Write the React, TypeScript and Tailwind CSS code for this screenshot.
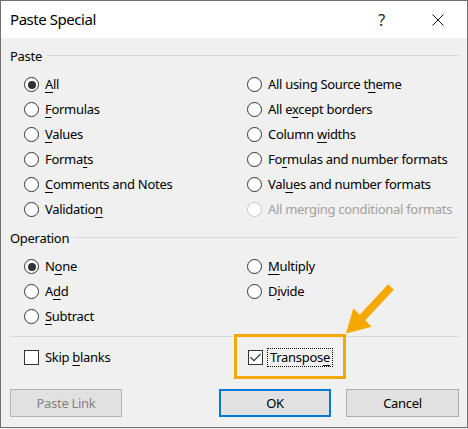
import React from 'react';

type Option = {
  label: string;
  accel: number; // index of the underlined access key, -1 for none
  checked?: boolean;
  disabled?: boolean;
};

const pasteLeft: Option[] = [
  { label: 'All', accel: 0, checked: true },
  { label: 'Formulas', accel: 0 },
  { label: 'Values', accel: 0 },
  { label: 'Formats', accel: 5 },
  { label: 'Comments and Notes', accel: 0 },
  { label: 'Validation', accel: 9 },
];

const pasteRight: Option[] = [
  { label: 'All using Source theme', accel: 18 },
  { label: 'All except borders', accel: 5 },
  { label: 'Column widths', accel: 7 },
  { label: 'Formulas and number formats', accel: 2 },
  { label: 'Values and number formats', accel: 3 },
  { label: 'All merging conditional formats', accel: -1, disabled: true },
];

const operationLeft: Option[] = [
  { label: 'None', accel: 1, checked: true },
  { label: 'Add', accel: 1 },
  { label: 'Subtract', accel: 0 },
];

const operationRight: Option[] = [
  { label: 'Multiply', accel: 0 },
  { label: 'Divide', accel: 1 },
];

function Accel({ text, at }: { text: string; at: number }) {
  if (at < 0) return <>{text}</>;
  return (
    <>
      {text.slice(0, at)}
      <span className="underline underline-offset-[3px]">{text[at]}</span>
      {text.slice(at + 1)}
    </>
  );
}

function Radio({ checked, disabled }: { checked?: boolean; disabled?: boolean }) {
  return (
    <span
      className={`flex h-[15px] w-[15px] shrink-0 items-center justify-center rounded-full border bg-white ${
        disabled ? 'border-[#c4c4c4]' : 'border-[#333333]'
      }`}
    >
      {checked && <span className="h-[8px] w-[8px] rounded-full bg-[#333333]" />}
    </span>
  );
}

function RadioRow({ option }: { option: Option }) {
  return (
    <div className="flex h-[25px] items-center gap-[6px] whitespace-nowrap">
      <Radio checked={option.checked} disabled={option.disabled} />
      <span className={option.disabled ? 'text-[#a0a0a0]' : 'text-black'}>
        <Accel text={option.label} at={option.accel} />
      </span>
    </div>
  );
}

function CheckBox({ checked }: { checked?: boolean }) {
  return (
    <span className="flex h-[15px] w-[15px] shrink-0 border border-[#333333] bg-white">
      {checked && (
        <svg width="13" height="13" viewBox="0 0 13 13">
          <path d="M1.5 6.2 L5 9.6 L11.5 3" fill="none" stroke="#333333" strokeWidth="1.2" />
        </svg>
      )}
    </span>
  );
}

function GroupHeader({ title }: { title: string }) {
  return (
    <div className="flex h-[20px] items-center gap-[5px]">
      <span>{title}</span>
      <span className="mt-[-2px] h-px flex-1 bg-[#d7d7d7]" />
    </div>
  );
}

export default function App() {
  return (
    <div className="relative h-[429px] w-[468px] bg-[#f0f0f0] font-['Noto_Sans',sans-serif] text-[13px] leading-none tracking-[-0.3px] text-black">
      <div className="flex h-[428px] w-[468px] flex-col border border-[#707070] bg-[#f0f0f0]">
        {/* title bar */}
        <div className="flex h-[37px] items-center bg-white pl-[9px] pr-[23px]">
          <span className="text-[15px] tracking-[-0.45px]">Paste Special</span>
          <span className="ml-auto text-[16px] text-[#222222]">?</span>
          <svg className="ml-[47px]" width="12" height="12" viewBox="0 0 12 12">
            <path d="M0.5 0.5 L11.5 11.5 M11.5 0.5 L0.5 11.5" stroke="#111111" strokeWidth="1" />
          </svg>
        </div>

        <div className="flex flex-1 flex-col pl-[9px] pr-[8px]">
          <div className="mt-[8px]">
            <GroupHeader title="Paste" />
          </div>
          <div className="mt-[6px] grid grid-cols-[223px_1fr] pl-[14px]">
            <div className="flex flex-col">
              {pasteLeft.map((o) => (
                <RadioRow key={o.label} option={o} />
              ))}
            </div>
            <div className="flex flex-col">
              {pasteRight.map((o) => (
                <RadioRow key={o.label} option={o} />
              ))}
            </div>
          </div>

          <div className="mt-[6px]">
            <GroupHeader title="Operation" />
          </div>
          <div className="mt-[6px] grid grid-cols-[223px_1fr] pl-[14px]">
            <div className="flex flex-col">
              {operationLeft.map((o) => (
                <RadioRow key={o.label} option={o} />
              ))}
            </div>
            <div className="flex flex-col">
              {operationRight.map((o) => (
                <RadioRow key={o.label} option={o} />
              ))}
            </div>
          </div>

          <div className="mt-[7px] h-px bg-[#d7d7d7]" />

          <div className="mt-[10px] grid h-[20px] grid-cols-[223px_1fr] pl-[14px]">
            <div className="flex items-center gap-[6px]">
              <CheckBox />
              <span>
                <Accel text="Skip blanks" at={5} />
              </span>
            </div>
            <div className="ml-px flex items-center gap-[4px]">
              <CheckBox checked />
              <span className="flex h-[19px] items-center border border-dotted border-black px-[2px]">
                <Accel text="Transpose" at={8} />
              </span>
            </div>
          </div>

          <div className="mt-[22px] flex h-[28px]">
            <button className="w-[112px] border border-[#b5b5b5] bg-[#e1e1e1] text-[#838383]">
              Paste Link
            </button>
            <button className="ml-auto w-[112px] border-2 border-[#0078d7] bg-[#e1e1e1]">OK</button>
            <button className="ml-[15px] w-[113px] border border-[#adadad] bg-[#e1e1e1]">Cancel</button>
          </div>
        </div>
      </div>

      {/* callout drawn over the Transpose option */}
      <div className="absolute left-[234px] top-[334px] h-[45px] w-[112px] border-[3px] border-[#f5a800]" />
      <svg className="pointer-events-none absolute left-0 top-0" width="468" height="429" viewBox="0 0 468 429">
        <polygon
          points="346,333.5 353.3,308.3 359.7,314.7 388.2,284.2 393.8,289.8 365.3,320.3 371.7,326.7"
          fill="#f5a800"
        />
      </svg>
    </div>
  );
}
